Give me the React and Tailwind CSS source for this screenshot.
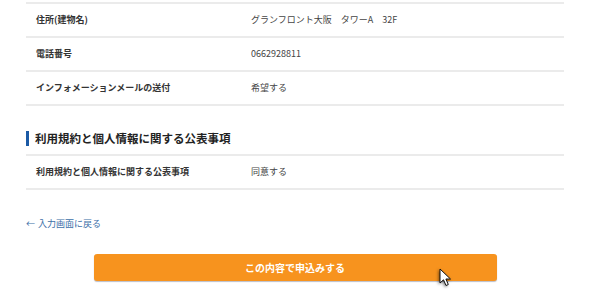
const rows = [
  { label: "住所(建物名)", value: "グランフロント大阪　タワーA　32F" },
  { label: "電話番号", value: "0662928811" },
  { label: "インフォメーションメールの送付", value: "希望する" },
];

function Row({ label, value }) {
  return (
    <div className="grid grid-cols-[225px_1fr] items-center h-[34px] border-b-2 border-[#ebebeb]">
      <div className="pl-[10px] text-[9px] font-bold text-[#333]">{label}</div>
      <div className="text-[9px] text-[#444]">{value}</div>
    </div>
  );
}

export default function App() {
  return (
    <div
      className="relative w-[600px] h-[307px] bg-white overflow-hidden"
      style={{ fontFamily: '"Noto Sans CJK JP", "Noto Sans", sans-serif' }}
    >
      <div className="ml-[26px] w-[538px] pt-[2px]">
        <div className="border-t-2 border-[#ebebeb]">
          {rows.map((r) => (
            <Row key={r.label} {...r} />
          ))}
        </div>

        <div className="mt-[25px] border-b-2 border-[#ebebeb] pb-[8px]">
          <div className="flex items-center gap-[6px]">
            <div className="w-[3px] h-[15px] bg-[#1b5aa5]" />
            <h2 className="text-[11.5px] font-bold text-[#222] leading-[15px]">
              利用規約と個人情報に関する公表事項
            </h2>
          </div>
        </div>
        <Row label="利用規約と個人情報に関する公表事項" value="同意する" />

        <a href="#" className="mt-[27px] flex items-center gap-[3px] text-[9px] leading-[13px] text-[#3d6fa8]">
          <span>←</span>
          <span>入力画面に戻る</span>
        </a>

        <div className="mt-[24px] flex justify-center">
          <button className="w-[403px] h-[27px] rounded-[3px] bg-[#f7931e] text-white text-[10px] font-bold shadow-[0_1px_1px_rgba(60,70,100,0.35)]">
            この内容で申込みする
          </button>
        </div>
      </div>

      <svg
        className="absolute left-[439px] top-[268px]"
        width="14"
        height="20"
        viewBox="0 0 14 20"
        style={{ filter: "drop-shadow(-1px 1px 1.5px rgba(0,0,0,0.5))" }}
      >
        <path
          d="M1 1 L1 15 L4.5 11.8 L7 17.5 L9.3 16.5 L6.9 11 L11.5 11 Z"
          fill="white"
          stroke="#111"
          strokeWidth="1"
          strokeLinejoin="round"
        />
      </svg>
    </div>
  );
}
